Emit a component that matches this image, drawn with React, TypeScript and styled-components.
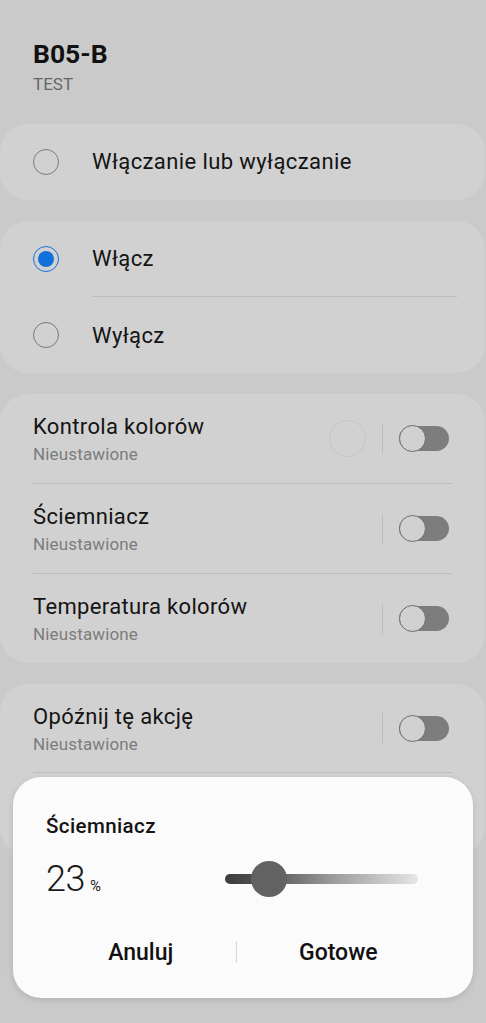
import React from "react";
import styled, { createGlobalStyle } from "styled-components";

const Global = createGlobalStyle`
  html, body { margin: 0; padding: 0; background: #cacaca; }
  body { font-family: Roboto, "Noto Sans", "Liberation Sans", sans-serif; color: #131313; }
  * { box-sizing: border-box; }
`;

const Page = styled.div`
  position: relative;
  width: 486px;
  height: 1023px;
  overflow: hidden;
  background: #cacaca;
  display: flex;
  flex-direction: column;
`;

const Header = styled.header`
  padding: 38px 33px 0;
  height: 124px;
`;

const Title = styled.h1`
  margin: 0;
  font-size: 26.5px;
  font-weight: 700;
  line-height: 32px;
  color: #111;
`;

const Sub = styled.div`
  margin-top: 3px;
  font-size: 17px;
  line-height: 22px;
  color: #666;
`;

const Cards = styled.div`
  display: flex;
  flex-direction: column;
  gap: 21.3px;
`;

const Card = styled.section`
  background: #d1d1d1;
  border-radius: 28px;
  margin: 0 1px 0 0;
  display: flex;
  flex-direction: column;
`;

const RadioRow = styled.div`
  height: 75.5px;
  display: flex;
  align-items: center;
  padding-left: 33px;
  gap: 33px;
  font-size: 22px;
  letter-spacing: 0.4px;
  color: #141414;
`;

const Radio = styled.span<{ $on?: boolean }>`
  width: 26px;
  height: 26px;
  border-radius: 50%;
  border: 1.5px solid ${(p) => (p.$on ? "#1b6fd4" : "#7a7a7a")};
  display: flex;
  align-items: center;
  justify-content: center;
  flex: none;
  &::after {
    content: "";
    display: ${(p) => (p.$on ? "block" : "none")};
    width: 16px;
    height: 16px;
    border-radius: 50%;
    background: #1270dc;
  }
`;

const Divider = styled.div<{ $inset: number; $right: number }>`
  height: 1px;
  background: #bcbcbc;
  margin: 0 ${(p) => p.$right}px 0 ${(p) => p.$inset}px;
`;

const SetRow = styled.div<{ $h?: number }>`
  height: ${(p) => p.$h ?? 89}px;
  display: flex;
  align-items: center;
  padding: 0 36px 0 33px;
`;

const SetText = styled.div`
  flex: 1;
  align-self: flex-start;
  padding-top: 19px;
  display: flex;
  flex-direction: column;
`;

const SetTitle = styled.div`
  font-size: 22px;
  line-height: 28px;
  letter-spacing: 0.35px;
  color: #141414;
`;

const SetSub = styled.div`
  margin-top: 2px;
  font-size: 17px;
  line-height: 22px;
  letter-spacing: 0.15px;
  color: #7c7c7c;
`;

const ColorDot = styled.span`
  width: 37px;
  height: 37px;
  border-radius: 50%;
  border: 1px solid #c6c6c6;
  margin-right: 16px;
`;

const VLine = styled.span`
  width: 1px;
  height: 30px;
  background: #bdbdbd;
  margin-right: 16px;
`;

const Toggle = styled.span`
  position: relative;
  width: 50px;
  height: 25px;
  border-radius: 13px;
  background: #7d7d7d;
  flex: none;
  &::after {
    content: "";
    position: absolute;
    left: 0;
    top: -1px;
    width: 27px;
    height: 27px;
    border-radius: 50%;
    background: #d1d1d1;
    border: 1.5px solid #6f6f6f;
    box-sizing: border-box;
  }
`;

const Dialog = styled.div`
  position: absolute;
  left: 13px;
  top: 777px;
  width: 460px;
  height: 221px;
  background: #fbfbfb;
  border-radius: 28px;
  box-shadow: 0 2px 6px rgba(0, 0, 0, 0.12);
  display: flex;
  flex-direction: column;
  padding: 36px 33px 0;
`;

const DTitle = styled.div`
  font-size: 20.5px;
  font-weight: 500;
  line-height: 26px;
  letter-spacing: 0.4px;
  color: #141414;
`;

const ValueRow = styled.div`
  margin-top: 18px;
  height: 44px;
  display: flex;
  align-items: center;
`;

const Value = styled.div`
  width: 179px;
  display: flex;
  align-items: baseline;
  font-size: 36px;
  font-weight: 300;
  color: #1a1a1a;
  letter-spacing: -0.5px;
`;

const Pct = styled.span`
  font-size: 15px;
  margin-left: 5px;
  font-weight: 400;
`;

const Slider = styled.div`
  position: relative;
  width: 193px;
  height: 10px;
  border-radius: 5px;
  background: linear-gradient(to right, #3c3c3c 0%, #5a5a5a 25%, #9a9a9a 55%, #e6e6e6 100%);
`;

const Thumb = styled.span`
  position: absolute;
  top: 50%;
  width: 36px;
  height: 36px;
  margin-left: -18px;
  margin-top: -18px;
  border-radius: 50%;
  background: #626262;
`;

const Buttons = styled.div`
  margin-top: 21px;
  height: 60px;
  display: flex;
  align-items: center;
`;

const Btn = styled.button<{ $w: number }>`
  width: ${(p) => p.$w}px;
  border: 0;
  background: transparent;
  font-family: inherit;
  font-size: 23px;
  font-weight: 500;
  color: #111;
  padding: 0;
`;

const BtnSep = styled.span`
  width: 1px;
  height: 22px;
  background: #d6d6d6;
`;

const settings = [
  { title: "Kontrola kolorów", dot: true },
  { title: "Ściemniacz" },
  { title: "Temperatura kolorów" },
];

export default function App() {
  const value = 23;
  return (
    <>
      <Global />
      <Page>
        <Header>
          <Title>B05-B</Title>
          <Sub>TEST</Sub>
        </Header>
        <Cards>
          <Card>
            <RadioRow>
              <Radio />
              Włączanie lub wyłączanie
            </RadioRow>
          </Card>
          <Card>
            <RadioRow>
              <Radio $on />
              Włącz
            </RadioRow>
            <Divider $inset={92} $right={28} />
            <RadioRow>
              <Radio />
              Wyłącz
            </RadioRow>
          </Card>
          <Card>
            {settings.map((s, i) => (
              <React.Fragment key={s.title}>
                {i > 0 && <Divider $inset={33} $right={33} />}
                <SetRow>
                  <SetText>
                    <SetTitle>{s.title}</SetTitle>
                    <SetSub>Nieustawione</SetSub>
                  </SetText>
                  {s.dot && <ColorDot />}
                  <VLine />
                  <Toggle />
                </SetRow>
              </React.Fragment>
            ))}
          </Card>
          <Card>
            <SetRow $h={88}>
              <SetText>
                <SetTitle>Opóźnij tę akcję</SetTitle>
                <SetSub>Nieustawione</SetSub>
              </SetText>
              <VLine />
              <Toggle />
            </SetRow>
            <Divider $inset={33} $right={33} />
            <SetRow $h={82} />
          </Card>
        </Cards>
        <Dialog>
          <DTitle>Ściemniacz</DTitle>
          <ValueRow>
            <Value>
              {value}
              <Pct>%</Pct>
            </Value>
            <Slider>
              <Thumb style={{ left: `${value}%` }} />
            </Slider>
          </ValueRow>
          <Buttons>
            <Btn $w={190}>Anuluj</Btn>
            <BtnSep />
            <Btn $w={204}>Gotowe</Btn>
          </Buttons>
        </Dialog>
      </Page>
    </>
  );
}
